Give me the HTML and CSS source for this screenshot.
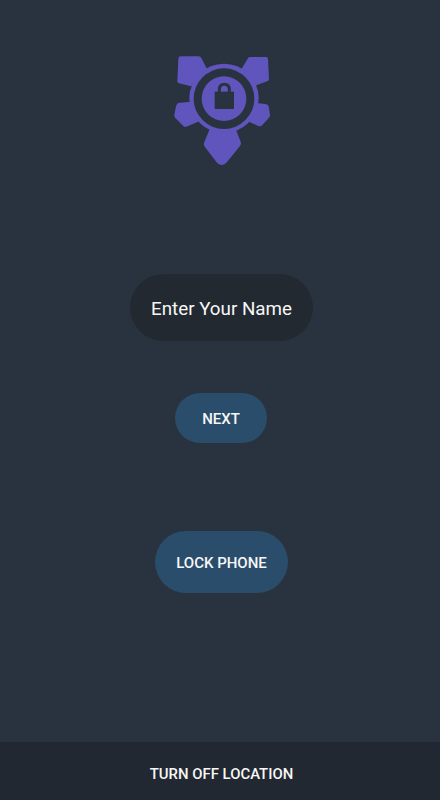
FILE: index.html
```html
<!DOCTYPE html>
<html lang="en">

<head>
  <meta charset="UTF-8">
  <title>Lock Phone</title>
  <link rel="stylesheet" href="styles.css">
</head>

<body>
  <div class="screen">
    <form class="container">
      <svg class="logo" viewBox="0 0 345 390" aria-hidden="true">
        <!-- arms of the shield -->
        <g class="logo-fill">
          <path d="M47 34H101Q106 34 109 39L126 72L78 124L42 115Q37 113 37 109L40 41Q40 34 47 34Z" />
          <path d="M254 36H303Q309 36 309 43L312 102Q312 107 306 109L270 122L229 73L248 41Q250 36 254 36Z" />
          <path d="M45 173L78 170L103 229L64 245Q58 247 54 242L31 219Q27 215 28 210L33 184Q35 174 45 173Z" />
          <path d="M274 174L301 177Q309 178 311 184L315 209Q316 214 312 218L292 240Q287 245 280 243L249 229Z" />
          <path d="M135 250H211L227 290Q230 297 225 303L184 353Q170 367 156 353L120 306Q115 300 117 294Z" />
        </g>
        <circle class="logo-fill" cx="177" cy="160" r="104" />
        <circle class="logo-ring" cx="177" cy="161" r="91" />
        <circle class="logo-fill" cx="177" cy="161" r="67" />
        <!-- padlock -->
        <path class="logo-shackle" d="M163 142V134C163 124 169 118 178 118S193 124 193 134V142" />
        <rect class="logo-ring" x="149" y="140" width="58" height="52" />
      </svg>

      <input type="text" class="name-input" aria-label="Name" placeholder="Enter Your Name">
      <button type="button" class="btn btn-next">NEXT</button>
      <button type="button" class="btn btn-lock">LOCK PHONE</button>
    </form>

    <button type="button" class="location-btn">TURN OFF LOCATION</button>
  </div>
</body>

</html>
```

FILE: styles.css
```css
body {
  font-family: Roboto, sans-serif;
  background-color: #29333f;
  margin: 0;
  padding: 0;
}

input,
button {
  box-sizing: border-box;
  border: none;
  padding: 0;
  font-family: inherit;
  color: #f7f7f7;
}

button {
  cursor: pointer;
}

.screen {
  display: flex;
  flex-direction: column;
  height: 100vh;
}

.container {
  flex: 1;
  display: flex;
  flex-direction: column;
  align-items: center;
  padding: 45px 0 0 3px;
}

.logo {
  width: 115px;
  height: 130px;
  margin-left: 2px;
}

.logo-fill {
  fill: #6054bd;
}

.logo-ring {
  fill: #29333f;
}

.logo-shackle {
  fill: none;
  stroke: #29333f;
  stroke-width: 9;
}

.name-input {
  width: 183px;
  height: 67px;
  margin-top: 99px;
  padding-top: 2px;
  border-radius: 34px;
  background-color: #222931;
  font-size: 18.8px;
  text-align: center;
}

.name-input::placeholder {
  color: #f7f7f7;
  opacity: 1;
}

.btn {
  border-radius: 31px;
  background-color: #2a4d6b;
  font-size: 15px;
  font-weight: 500;
}

.btn-next {
  width: 92px;
  height: 50px;
  margin-top: 52px;
  margin-right: 1px;
  padding-top: 1px;
}

.btn-lock {
  width: 133px;
  height: 62px;
  margin-top: 88px;
  padding-top: 2px;
}

.location-btn {
  height: 58px;
  padding: 5px 0 0 3px;
  background-color: #222831;
  font-size: 14.9px;
  font-weight: 500;
}
```
